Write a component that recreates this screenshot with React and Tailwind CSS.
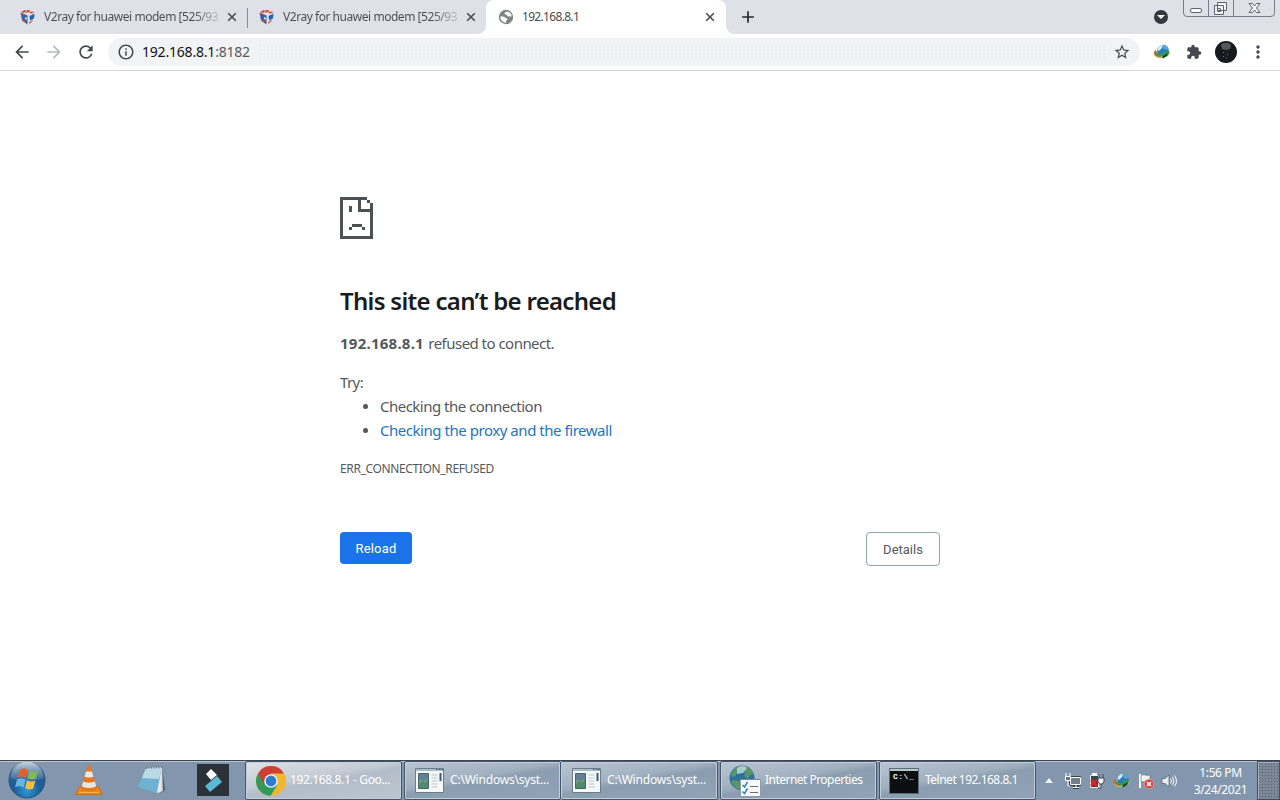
import React from 'react'
import {
  MdAdd, MdArrowBack, MdArrowForward, MdExtension,
  MdInfoOutline, MdMoreVert, MdRefresh, MdStarBorder,
} from 'react-icons/md'
import { cx } from 'class-variance-authority'

function CloseIcon({ className }) {
  return (
    <svg viewBox="0 0 14 14" className={cx('h-[14px] w-[14px] shrink-0', className)}>
      <path d="M3.200 3.200l7.600 7.600M10.800 3.200l-7.600 7.600" stroke="currentColor" strokeWidth="1.600" />
    </svg>
  )
}

function CubeIcon() {
  return (
    <svg viewBox="0 0 16 16" className="h-4 w-4 shrink-0">
      <path d="M0.500 2.500 8 0.300l7.500 2.200L8 6z" fill="#e6e2e2" />
      <path d="M1 3l4-2 1.500 1L4 4zM7 1h3l-1 2-3 1zM11 2.500l4 .5-4 1.500-2-.8z" fill="#c9492f" />
      <path d="M0.500 3.500 7.500 6.500v9L2 11.500z" fill="#2c66ad" />
      <path d="M8.500 6.500l7-3-1.500 8-5.500 4z" fill="#e4e8ee" />
      <path d="M1 4l2 1-1.200 2zM2 10l3 .5 1 3.500-3.500-2.500z" fill="#c9492f" />
      <path d="M5 8l2 1-.5 2-1.500-1z" fill="#dfe6ef" />
      <path d="M9.500 7l5-2.500-.5 5-4 2z" fill="#2464af" />
      <path d="M9 13l4-2.500-.6 2L9 15z" fill="#d06a4f" />
    </svg>
  )
}

function GlobeIcon() {
  return (
    <svg viewBox="0 0 16 16" className="h-4 w-4 shrink-0">
      <circle cx="8" cy="8" r="7.200" fill="#7f8683" />
      <path d="M9.500 2.400C7.500 2.500 6 3.800 6.800 5.200c.6.900 1.900.3 2.400 1.200.5 1.100 1.700 1.500 2.700.9l1.800.2C13.600 5 12 3 9.500 2.400z" fill="#fff" />
      <path d="M2.300 7.600c1.800-.3 3.800-.2 4.700 1 .6.900 2.300.6 2.500 1.700.1 1.100-1.500.9-1.500 1.900v1.600C4.800 13.600 2.300 11 2.300 7.600z" fill="#fff" />
    </svg>
  )
}

function IdmIcon() {
  return (
    <svg viewBox="0 0 18 16" className="h-4 w-[18px] shrink-0">
      <ellipse cx="9" cy="9.500" rx="8" ry="4.500" fill="#cbbd55" transform="rotate(-8 9 9.500)" />
      <circle cx="10" cy="6.500" r="5.700" fill="#2b78bd" />
      <path d="M5 4c1-2.500 3-3 5-3l-1 3-3 3-1.500-1z" fill="#d7e9f4" />
      <path d="M10 1c3 0 5 2 5.500 4l-3 1-3-2z" fill="#55a7d5" />
      <path d="M1 7.500c-1 3 2 5.500 7 5.500l-1-2.500C4 10.500 2.500 9 3 6z" fill="#c4673a" />
      <path d="M3 7.500c1 2 4 2.500 7 2V7l6.500.5-2 4.500-5 2.500v-2.200C6 12.500 3 11.500 3 7.500z" fill="#2c9a5a" />
      <path d="M10 12l5-3-1.500 3-4 2.500z" fill="#12371f" />
    </svg>
  )
}

function SadPageIcon() {
  return (
    <svg viewBox="0 0 11 14" shapeRendering="crispEdges" className="h-[42px] w-[33px]">
      <path
        d="M0 0h9v1H7v3h3V2h1v12H0zM1 1v12h9V5H6V1zM9 1h1v1H9zM3 3h1v2H3zM4 9h3.330v1H4zM3 10h1v1H3zM7.330 10h1v1h-1z"
        fill="#4b5155"
        fillRule="evenodd"
      />
    </svg>
  )
}

function StartOrb() {
  return (
    <svg viewBox="0 0 38 38" className="h-[38px] w-[38px]">
      <defs>
        <radialGradient id="orb" cx="50%" cy="78%" r="75%">
          <stop offset="0" stopColor="#2f9bd6" />
          <stop offset="0.500" stopColor="#1c5b99" />
          <stop offset="1" stopColor="#3c6187" />
        </radialGradient>
        <linearGradient id="orbShine" x1="0" y1="0" x2="0" y2="1">
          <stop offset="0" stopColor="#dce5ee" stopOpacity="0.900" />
          <stop offset="1" stopColor="#7fa3c5" stopOpacity="0.200" />
        </linearGradient>
      </defs>
      <circle cx="19" cy="19" r="18" fill="url(#orb)" stroke="#31506f" />
      <path d="M2.500 17a16.500 16.500 0 0 1 33 0c-8 4-24 4-33 0z" fill="url(#orbShine)" />
      <path d="M12 9c3-2 5-1.800 8 0l-2 8c-3-1.800-5-1.800-8.500-.2z" fill="#e4602b" />
      <path d="M21.500 9.500c3 1.500 5.500 1.500 8.500.2l-2 7.800c-3 1.300-5.500 1.300-8.300-.2z" fill="#83b755" />
      <path d="M9 18.500c3-1.500 5.500-1.500 8.500.2l-2 8c-3-1.900-5.500-1.900-8.500-.4z" fill="#68b5e3" />
      <path d="M19 19.300c3 1.600 5.500 1.600 8.500.2l-2.200 8c-3 1.300-5.500 1.200-8.200-.5z" fill="#f4bd3d" />
    </svg>
  )
}

function ConeIcon() {
  return (
    <svg viewBox="0 0 28 32" className="h-8 w-7">
      <path d="M4 23h20l3 7.500H1z" fill="#e98a1b" stroke="#c96e19" />
      <path d="M12.500 1.500h3L22 25c-3 3-13 3-16 0z" fill="#e87522" />
      <path d="M11 7.500h6l1.400 5c-2 1.300-6.800 1.300-8.800 0zM8.200 17.500c3 1.500 8.600 1.500 11.600 0l1.300 4.800c-3 2.200-11.200 2.200-14.200 0z" fill="#e9e7e1" />
      <path d="M4 28.500h20" stroke="#f8b24a" />
    </svg>
  )
}

function NotepadIcon() {
  return (
    <svg viewBox="0 0 30 30" className="h-[30px] w-[30px]">
      <path d="M25 3l3 22-4 3z" fill="#4d5860" />
      <path d="M9 3l16-1 1 24-5 2z" fill="#cdd5d8" />
      <path d="M9 3l16-1-5 26L1 22z" fill="#6fb1d2" />
      <path d="M9 3l16-1-3 12L5 13z" fill="#b9dbe8" />
      <path d="M20 28l4-2 1-24z" fill="#e6eaeb" />
      <path d="M9 3l16-1" stroke="#65717a" strokeWidth="2" strokeDasharray="1 1.500" />
    </svg>
  )
}

function FilmoraIcon() {
  return (
    <svg viewBox="0 0 32 32" className="h-8 w-8">
      <path d="M0 0h32v32H0z" fill="#2c3137" />
      <path d="M14 5l6 6-6 5-5-6z" fill="#fff" />
      <path d="M20 12l5 6-12 10-5-6z" fill="#5bb8d7" />
    </svg>
  )
}

function ChromeIcon() {
  return (
    <svg viewBox="0 0 30 30" className="h-[30px] w-[30px] shrink-0">
      <circle cx="15" cy="15" r="15" fill="#f0b72f" />
      <path d="M15 15 2 7.500A15 15 0 0 0 14.500 30L21.500 18.500z" fill="#31995b" />
      <path d="M2 7.500a15 15 0 0 1 26 0H15l-6.500 11z" fill="#cc3f35" />
      <circle cx="15" cy="15" r="6.800" fill="#f2f5f7" />
      <circle cx="15" cy="15" r="5.400" fill="#2b7dd0" />
    </svg>
  )
}

function AppWindowIcon() {
  return (
    <svg viewBox="0 0 29 25" className="h-[25px] w-[29px] shrink-0">
      <path d="M.5.500h28v24H.5z" fill="#f6f8f8" stroke="#6d7d88" />
      <path d="M1 1h27v2H1z" fill="#a9bcc7" />
      <path d="M21 1.500h1.500M24 1.500h1.500M26.500 1.500H28" stroke="#42566a" />
      <path d="M3.500 5.500h10v15h-10z" fill="#6f9c85" stroke="#4b626c" />
      <path d="M4 6h9v4l-4 3-5-2z" fill="#5f7f9a" />
      <path d="M4 17l3-4 3 2 3-4v9H4z" fill="#4f8d68" />
      <path d="M16.500 7h6M16.500 10h6M16.500 13h6M16.500 16h6M16.500 19h6" stroke="#bcc5c9" />
      <path d="M24.500 5h2v8h-2z" fill="#315b8a" />
    </svg>
  )
}

function InternetIcon() {
  return (
    <svg viewBox="0 0 32 32" className="h-8 w-8 shrink-0">
      <circle cx="13" cy="13" r="12.500" fill="#2f6f9f" />
      <path d="M2 9c2-5 5-7 9-8l1 4-4 2-1 4-4 1zM14 1c5 0 9 4 11 8l-4 1-2 4-4-3 1-4-3-2zM5 15l6 1 3 4-3 5c-4-1-8-5-9-9z" fill="#55966a" />
      <path d="M8 3c4-3 8-2 10 0l-4 5-6 1z" fill="#cbe1e7" opacity=".75" />
      <path d="M11.500 14.500h20v17h-20z" fill="#f7f9fa" stroke="#8e9ba3" />
      <path d="M12 14.500h19" stroke="#68737b" strokeDasharray="1 1" />
      <path d="M13.500 20l2 2 3-5M13.500 26.500l2 2 3-5" fill="none" stroke="#2884bd" strokeWidth="1.500" />
      <path d="M21 21.500h8M21 27.500h8" stroke="#66727a" />
    </svg>
  )
}

function TerminalIcon() {
  return (
    <div className="flex h-6 w-7 shrink-0 flex-col border-t-2 border-[#b8c3ca] bg-[#0c0f10] shadow-[0_0_0_1px_#5f6b74]">
      <span className="pt-px pl-[3px] font-['Liberation_Mono'] text-[8px] leading-[10px] font-bold tracking-[0.5px] text-white">C:\_</span>
    </div>
  )
}

const TABS = [
  { title: 'V2ray for huawei modem [525/93', divider: true },
  { title: 'V2ray for huawei modem [525/93' },
]

function TabStrip() {
  return (
    <div className="flex h-[34px] bg-[#dee1e7] pl-2 text-[12px] text-[#494c50]">
      {TABS.map(({ title, divider }, i) => (
        <div key={i} className="relative flex h-[34px] w-[239px] items-center pl-3">
          <CubeIcon />
          <span className="ml-2 w-[175px] bg-[linear-gradient(to_right,#494c50_85%,#c3c6cb)] bg-clip-text tracking-[-0.46px] whitespace-nowrap text-transparent">
            {title}
          </span>
          <CloseIcon className="ml-[6px]" />
          {divider && <span className="absolute top-2 -right-px h-5 w-px bg-[#898c92]" />}
        </div>
      ))}
      <div className="relative flex h-[34px] w-[240px] items-center rounded-t-lg bg-white pl-3">
        <span className="absolute bottom-0 -left-2 h-2 w-2 bg-[radial-gradient(circle_at_0_0,transparent_7.5px,white_8px)]" />
        <span className="absolute -right-2 bottom-0 h-2 w-2 bg-[radial-gradient(circle_at_100%_0,transparent_7.5px,white_8px)]" />
        <GlobeIcon />
        <span className="ml-2 flex-1 tracking-[-0.68px]">192.168.8.1</span>
        <CloseIcon className="mr-[9px]" />
      </div>
      <MdAdd className="mt-[7px] ml-[12px] h-5 w-5 text-[#27292c]" />
      <div className="mt-[10px] mr-[15px] ml-auto grid h-[14px] w-[14px] place-items-center rounded-full bg-[#34383c]">
        <span className="h-0 w-0 border-x-[4px] border-t-[4px] border-x-transparent border-t-white" />
      </div>
      <WindowControls />
    </div>
  )
}

function WindowControls() {
  return (
    <svg viewBox="0 0 92 17" fill="none" className="mr-[5px] h-[17px] w-[92px]">
      <path d="M.5 0v13q0 3.500 3.500 3.500h84q3.500 0 3.500-3.500V0M25.500 0v16.500M50.500 0v16.500" stroke="#797e86" />
      <rect x="7.500" y="8.500" width="11" height="4" rx="1.500" stroke="#5d6471" fill="#fafafa" />
      <path d="M34.500 2.500h9v8h-9zM31.500 5.500h9v9h-9z" stroke="#5d6471" fill="#f4f5f7" />
      <path d="M34.500 8.500h3v3h-3z" stroke="#5d6471" />
      <path d="M66 3.500h3.500L71.500 6l2-2.500H77L73.500 8l3.500 4.500h-3.500l-2-2.500-2 2.500H66L69.500 8z" stroke="#5d6471" fill="#f4f5f7" />
    </svg>
  )
}

function Toolbar() {
  return (
    <div className="flex h-[37px] items-center border-b border-[#d5d6d8] bg-white text-[#45494d]">
      <MdArrowBack className="ml-3 h-5 w-5" />
      <MdArrowForward className="ml-3 h-5 w-5 text-[#b7babd]" />
      <MdRefresh className="ml-3 h-5 w-5" />
      <div className="ml-3 flex h-7 w-[1032px] items-center rounded-full bg-[#f1f3f4] pr-[9px] pl-[9px]">
        <MdInfoOutline className="h-[18px] w-[18px]" />
        <span className="mb-px ml-[7px] text-[14px] tracking-[-0.2px] text-[#56595d]">
          <span className="text-[#111]">192.168.8.1</span>:8182
        </span>
        {/* faint dither across the empty part of the address field */}
        <span className="mx-2 h-4 flex-1 bg-[radial-gradient(#e6e8ea_0.6px,transparent_0.9px)] bg-[size:4px_4px]" />
        <MdStarBorder className="h-[18px] w-[18px]" />
      </div>
      <div className="ml-[13px]"><IdmIcon /></div>
      <MdExtension className="ml-[15px] h-4 w-4" />
      <svg viewBox="0 0 22 22" className="ml-[13px] h-[22px] w-[22px]">
        <circle cx="11" cy="11" r="11" fill="#17191c" />
        <path d="M6 4c1-3 8-3 10 0l-1 4-4 1-4-1z" fill="#55595e" />
        <path d="M8 11l1 1M12 13l1 1M8 15l1 1M11 17h1" stroke="#6c7074" fill="none" />
      </svg>
      <MdMoreVert className="ml-[11px] h-5 w-5" />
    </div>
  )
}

function ErrorPage() {
  return (
    <main className="w-[600px] flex-1 self-center pt-[126px] text-[15px] leading-6 text-[#54585c]">
      <SadPageIcon />
      <h1 className="mt-[47px] text-[24px] leading-[30px] font-semibold tracking-[-0.7px] text-[#191b1d]">
        This site can’t be reached
      </h1>
      <p className="mt-[15px] tracking-[-0.53px]">
        <strong className="mr-px font-bold tracking-[0.24px]">192.168.8.1</strong> refused to connect.
      </p>
      <p className="mt-[15px] tracking-[-0.6px]">Try:</p>
      <ul className="tracking-[-0.46px]">
        {['Checking the connection', 'Checking the proxy and the firewall'].map((tip, i) => (
          <li key={tip} className="flex items-center pl-[23px]">
            <span className="mt-px mr-[12px] h-[5px] w-[5px] rounded-full bg-[#54585c]" />
            <span className={cx(i === 0 && 'tracking-[-0.52px]', i === 1 && 'text-[#1c74c9]')}>{tip}</span>
          </li>
        ))}
      </ul>
      <div className="mt-[15px] text-[12px] tracking-[-0.36px]">ERR_CONNECTION_REFUSED</div>
      <div className="mt-[51px] flex items-start justify-between font-['Roboto',sans-serif] text-[13px]">
        <button className="h-8 w-[72px] rounded-[4px] bg-[#1a73e8] pt-[2px] tracking-[0.2px] text-white">Reload</button>
        <button className="h-[34px] w-[74px] rounded-[4px] border border-[#8ea2b4] bg-white pt-[2px]">Details</button>
      </div>
    </main>
  )
}

const TASKS = [
  { label: '192.168.8.1 - Goo...', Icon: ChromeIcon, style: 'ml-[16px] w-[157px] pl-[10px] gap-[4px] tracking-[-0.38px]', active: true },
  { label: 'C:\\Windows\\syst...', Icon: AppWindowIcon, style: 'ml-[2px] w-[157px] pl-[10px] gap-[6px] tracking-[-0.2px]' },
  { label: 'C:\\Windows\\syst...', Icon: AppWindowIcon, style: 'w-[157px] pl-[11px] gap-[6px] tracking-[-0.2px] border-l-0' },
  { label: 'Internet Properties', Icon: InternetIcon, style: 'ml-[2px] w-[157px] pl-[8px] gap-[4px] tracking-[-0.53px]' },
  { label: 'Telnet 192.168.8.1', Icon: TerminalIcon, style: 'ml-[2px] w-[157px] pl-[10px] gap-[7px] tracking-[-0.5px]' },
]

function TaskButton({ label, Icon, style, active }) {
  return (
    <div
      className={cx(
        'flex h-[39px] shrink-0 items-center overflow-hidden rounded-[2px] border border-[#44566b] text-[12px] whitespace-nowrap text-white shadow-[inset_0_0_0_1px_#c4ced8]',
        active
          ? 'bg-[linear-gradient(170deg,#dfe3e7_0%,#c3cbd4_42%,#b2bdc9_52%,#bcc6d0_100%)]'
          : 'bg-[linear-gradient(170deg,#b9c5d1_0%,#a1b0c0_42%,#8b9db0_52%,#91a3b6_100%)]',
        style
      )}
    >
      <Icon />
      <span className="mb-[2px]">{label}</span>
    </div>
  )
}

function Tray() {
  return (
    <div className="flex flex-1 items-center">
      <svg viewBox="0 0 8 5" className="ml-[9px] h-[5px] w-2"><path d="M4 0l4 5H0z" fill="#f2f4f6" /></svg>
      <svg viewBox="0 0 16 16" className="ml-[12px] h-4 w-4" fill="none">
        <path d="M5.500 4.500h10v7h-10zM8 14.500h6M11 12v2" stroke="#35414c" strokeWidth="3" />
        <path d="M5.500 4.500h10v7h-10z" fill="#71818c" stroke="#fff" />
        <path d="M8 14.500h6M11 12v2M3 8v5h2M1 0v3M5 0v3" stroke="#fff" />
        <path d="M.5 3.500h5v4h-5z" fill="#65737d" stroke="#fff" />
      </svg>
      <svg viewBox="0 0 16 16" className="ml-[8px] h-4 w-4" fill="none">
        <path d="M1.500 2.500h8v12h-8z" fill="#36434b" stroke="#e9eff2" />
        <path d="M3 1h5" stroke="#fff" strokeWidth="2" />
        <path d="M9 5h6v4l-2 2h-2L9 9zM10 1v4M14 1v4M12 11v4H9" fill="#f4f5f6" stroke="#3f4850" />
        <path d="M2 7l6 6M8 7l-6 6" stroke="#d82727" strokeWidth="2.500" />
      </svg>
      <div className="ml-[8px]"><IdmIcon /></div>
      <svg viewBox="0 0 16 16" className="ml-[7px] h-4 w-4" fill="none">
        <path d="M2 1v14" stroke="#fff" strokeWidth="2" />
        <path d="M3 2c3-1 5 1 9 0v7c-4 1-6-1-9 0z" fill="#f0f2f4" stroke="#52606d" strokeWidth=".6" />
        <circle cx="11" cy="11" r="4.800" fill="#d34739" stroke="#f2b5a8" strokeWidth=".6" />
        <path d="M9 9l4 4M13 9l-4 4" stroke="#fff" strokeWidth="1.500" />
      </svg>
      <svg viewBox="0 0 16 16" className="ml-[7px] h-4 w-4" fill="none">
        <path d="M1 5.500h3L8 2v12l-4-3.500H1z" fill="#e8ebed" stroke="#4d5a66" strokeWidth=".7" />
        <path d="M9.500 5.500q2 2.500 0 5M11.500 4q3 4 0 8M13.500 2.500q4 5.500 0 11" stroke="#fff" />
      </svg>
      <div className="ml-auto w-[73px] text-center text-[12px] leading-[17px] tracking-[-0.4px] text-white">
        <div>1:56 PM</div>
        <div>3/24/2021</div>
      </div>
      <div className="h-[39px] w-[23px] border border-[#405064] bg-[#7b8794] bg-[radial-gradient(#586370_0.8px,transparent_1px)] bg-[size:3px_3px] shadow-[inset_1px_1px_0_#aab6c2]" />
    </div>
  )
}

function Taskbar() {
  return (
    <footer className="flex h-10 items-start border-t border-[#3e4650] bg-[#8297ad] shadow-[inset_0_1px_0_#b8c4cf]">
      <div className="ml-2"><StartOrb /></div>
      <div className="mt-[3px] ml-[29px]"><ConeIcon /></div>
      <div className="mt-[4px] ml-[34px]"><NotepadIcon /></div>
      <div className="mt-[3px] ml-[30px]"><FilmoraIcon /></div>
      {TASKS.map((task, i) => <TaskButton key={i} {...task} />)}
      <Tray />
    </footer>
  )
}

export default function App() {
  return (
    <div className="flex h-[800px] w-[1280px] flex-col overflow-hidden bg-white font-['Noto_Sans',sans-serif]">
      <TabStrip />
      <Toolbar />
      <ErrorPage />
      <Taskbar />
    </div>
  )
}
